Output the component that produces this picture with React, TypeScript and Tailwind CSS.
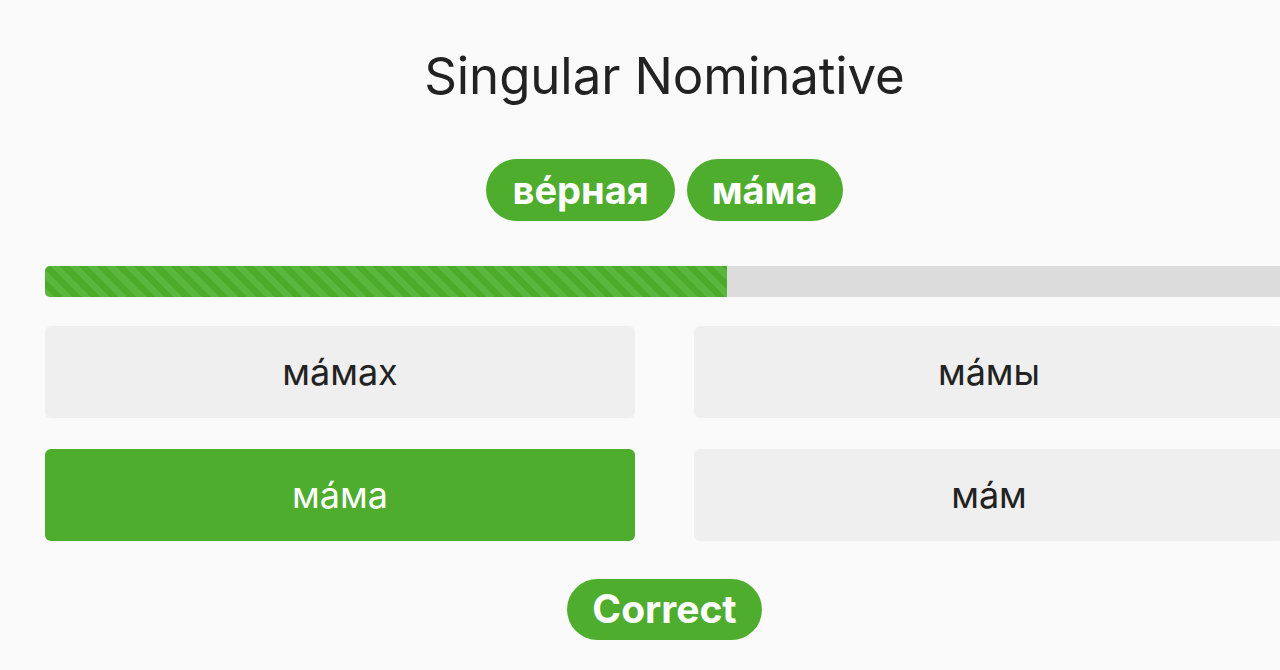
import React from "react";

const options = [
  { text: "ма́мах", selected: false },
  { text: "ма́мы", selected: false },
  { text: "ма́ма", selected: true },
  { text: "ма́м", selected: false },
];

export default function App() {
  return (
    <div className="w-full h-[670px] overflow-hidden bg-[#fafafa] font-['Inter','Noto_Sans',sans-serif]">
      <div className="ml-[45px] w-[1239px] flex flex-col items-center">
        <h1 className="mt-[46px] text-[51px] leading-[60px] font-normal text-[#222] tracking-[-0.1px]">
          Singular Nominative
        </h1>

        <div className="mt-[53px] flex gap-3">
          <span className="h-[62px] px-[26px] rounded-full bg-[#4fad2e] text-white text-[38px] font-bold flex items-center">
            ве́рная
          </span>
          <span className="h-[62px] px-[25px] rounded-full bg-[#4fad2e] text-white text-[38px] font-bold flex items-center">
            ма́ма
          </span>
        </div>

        <div className="mt-[45px] w-full h-[31px] rounded-[5px] bg-[#dcdcdc] overflow-hidden">
          <div className="h-full w-[682px] bg-[repeating-linear-gradient(45deg,#5ab63d_0px,#5ab63d_6.5px,#4dab2b_6.5px,#4dab2b_13px)]" />
        </div>

        <div className="mt-[29px] w-full grid grid-cols-2 gap-x-[59px] gap-y-[31px]">
          {options.map((o) => (
            <button
              key={o.text}
              className={
                o.selected
                  ? "h-[92px] rounded-[6px] bg-[#4fad2e] text-white text-[36px]"
                  : "h-[92px] rounded-[6px] bg-[#efefef] text-[#222] text-[36px]"
              }
            >
              {o.text}
            </button>
          ))}
        </div>

        <span className="mt-[38px] h-[61px] px-[25px] rounded-full bg-[#4fad2e] text-white text-[39px] font-bold flex items-center">
          Correct
        </span>
      </div>
    </div>
  );
}
